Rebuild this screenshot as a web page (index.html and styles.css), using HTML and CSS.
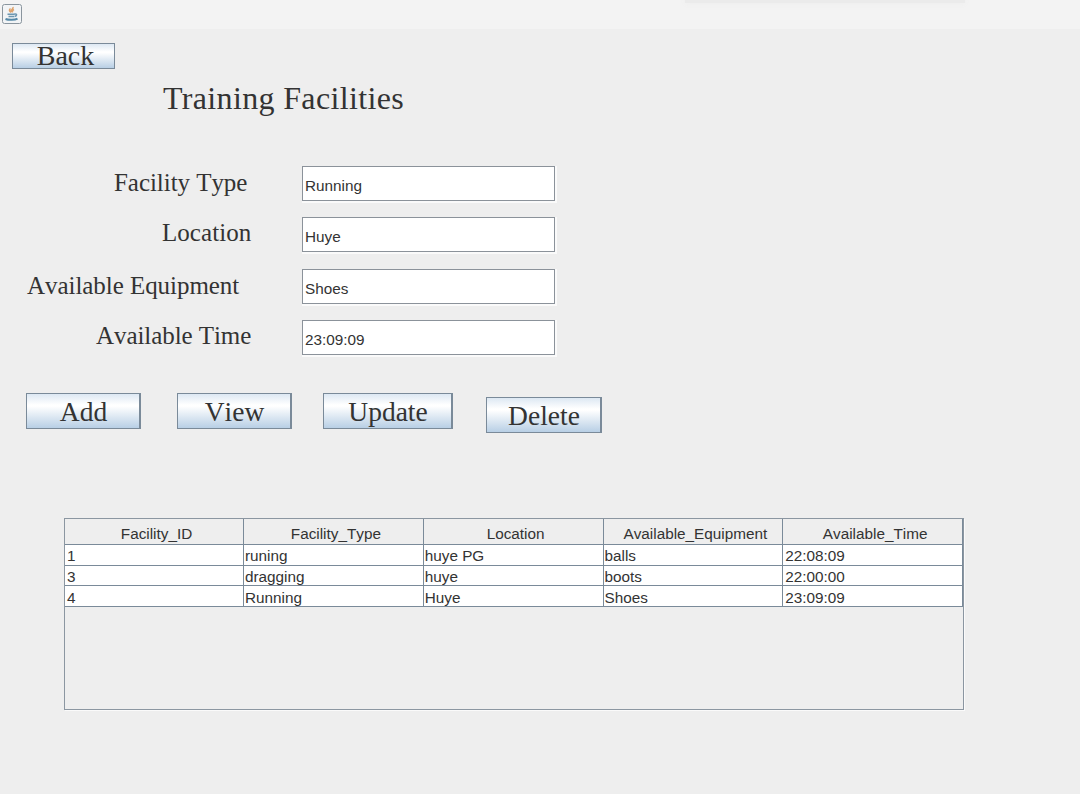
FILE: index.html
```html
<!DOCTYPE html>
<html lang="en">
<head>
<meta charset="utf-8">
<title>Training Facilities</title>
<link rel="stylesheet" href="styles.css">
</head>
<body>
<header class="titlebar">
  <svg class="java-icon" width="22" height="22" viewBox="0 0 22 22">
    <rect x="2.5" y="3.5" width="19" height="19" rx="2" fill="#f2f4f6" stroke="#8a959e"/>
    <path d="M13 6c1 2-3 2.500-2 5M10.500 7.500c-1.500 1.500-1.500 2.500.5 4M14 8.500c-2 .8-2 1.500-1.500 3" fill="none" stroke="#dda36e" stroke-width="1.500"/>
    <path d="M7.500 13.200h7M8.500 15.500h5.500M14.500 13c3-.5 2.500 2 0 2.500" fill="none" stroke="#6d96b0" stroke-width="1.500"/>
    <path d="M5.500 18c3 1.200 9.500 1.200 12-.3" fill="none" stroke="#5689a8" stroke-width="2"/>
  </svg>
  <div class="window-shadow"></div>
</header>
<main class="content">
  <button class="btn back">Back</button>
  <h1 class="title">Training Facilities</h1>
  <form class="form">
    <div class="row type"><label class="label" for="type">Facility Type</label><input class="field" id="type" value="Running"></div>
    <div class="row location"><label class="label" for="location">Location</label><input class="field" id="location" value="Huye"></div>
    <div class="row equipment"><label class="label" for="equipment">Available Equipment</label><input class="field" id="equipment" value="Shoes"></div>
    <div class="row time"><label class="label" for="time">Available Time</label><input class="field" id="time" value="23:09:09"></div>
  </form>
  <div class="actions">
    <button class="btn add">Add</button>
    <button class="btn view">View</button>
    <button class="btn update">Update</button>
    <button class="btn delete">Delete</button>
  </div>
  <div class="table-pane">
    <table class="table">
      <thead><tr><th>Facility_ID</th><th>Facility_Type</th><th>Location</th><th>Available_Equipment</th><th>Available_Time</th></tr></thead>
      <tbody>
        <tr><td>1</td><td>runing</td><td>huye PG</td><td>balls</td><td>22:08:09</td></tr>
        <tr><td>3</td><td>dragging</td><td>huye</td><td>boots</td><td>22:00:00</td></tr>
        <tr><td>4</td><td>Running</td><td>Huye</td><td>Shoes</td><td>23:09:09</td></tr>
      </tbody>
    </table>
  </div>
</main>
</body>
</html>
```
FILE: styles.css
```css
* { box-sizing: border-box; }
body {
  margin: 0;
  height: 794px;
  overflow: hidden;
  background: #eeeeee;
  color: #333333;
  font-family: "Liberation Sans", Arial, sans-serif;
  font-kerning: none;
}
.titlebar {
  display: flex;
  justify-content: space-between;
  height: 29px;
  padding-right: 115px;
  background: #f3f3f3;
  overflow: hidden;
}
.java-icon { display: block; margin-top: 1px; overflow: visible; }
.window-shadow {
  width: 280px;
  height: 3px;
  background: #ebebeb;
  box-shadow: 0 0 6px #ebebeb;
}
.content { display: flex; flex-direction: column; align-items: flex-start; }
.btn {
  display: block;
  padding: 1px 0 0 1px;
  border: 1px solid #7a8a99;
  border-right-width: 2px;
  border-radius: 0;
  background: linear-gradient(#dde8f3 0%, #ffffff 32%, #ffffff 36%, #b8cfe5 100%);
  color: #333333;
  font-family: "Liberation Serif", "Times New Roman", serif;
  font-size: 27.5px;
  line-height: 33px;
  height: 36px;
  text-align: center;
  font-kerning: none;
}
.back { width: 103px; height: 26px; margin: 14px 0 0 12px; padding: 0 0 0 4px; border-right-width: 1px; font-size: 28px; line-height: 24px; }
.title {
  margin: 10px 0 0 163px;
  font: 400 32px/38px "Liberation Serif", "Times New Roman", serif;
  letter-spacing: 0.35px;
}
.form { display: flex; flex-direction: column; margin-top: 49px; }
.row { display: flex; width: 556px; height: 36px; justify-content: space-between; }
.label {
  font-family: "Liberation Serif", "Times New Roman", serif;
  font-size: 25px;
  line-height: 32px;
  white-space: nowrap;
}
.type { padding-left: 114px; }
.type .label, .equipment .label { line-height: 34px; letter-spacing: -0.05px; }
.location { padding-left: 162px; margin-top: 15px; }
.location .label { letter-spacing: 0.05px; }
.equipment { padding-left: 27px; margin-top: 16px; }
.time { padding-left: 96px; margin-top: 15px; }
.time .label { letter-spacing: -0.07px; }
.field {
  width: 253px;
  height: 35px;
  margin-right: 1px;
  padding: 5px 0 0 2px;
  border: 1px solid #8b929a;
  border-radius: 0;
  outline: 0;
  background: #ffffff;
  box-shadow: 1px 1px 0 1px #fafafa;
  color: #333333;
  font: 15.3px "Liberation Sans", Arial, sans-serif;
  font-kerning: none;
}
.actions { display: flex; margin: 37px 0 0 26px; }
.add { width: 115px; }
.view { width: 115px; margin-left: 36px; }
.update { width: 130px; margin-left: 31px; }
.delete { width: 116px; margin: 4px 0 0 33px; }
.table-pane {
  width: 900px;
  height: 192px;
  margin: 85px 0 0 64px;
  border: 1px solid #8b96a1;
  box-shadow: 1px 1px 0 #fafafa;
}
.table {
  width: 898px;
  table-layout: fixed;
  border-collapse: separate;
  border-spacing: 0;
  font-size: 15.3px;
}
.table th {
  height: 26px;
  padding: 4px 0 0 5px;
  border: 0 solid #7a8a99;
  border-width: 0 1px 1px 0;
  font-weight: 400;
  line-height: 20px;
}
.table td {
  height: 20.700px;
  padding: 2px 0 0 1px;
  border: 0 solid #7a8a99;
  border-width: 0 1px 1px 0;
  background: #ffffff;
  line-height: 17px;
}
.table td:first-child { padding-left: 2px; }
.table th:first-child, .table td:first-child { width: 179px; }
.table td:last-child { padding-left: 2px; }
```
